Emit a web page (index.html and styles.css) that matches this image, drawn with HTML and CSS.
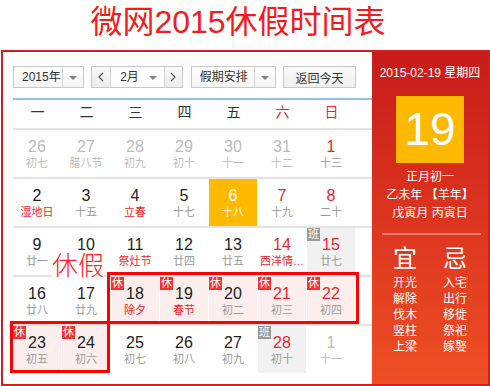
FILE: index.html
```html
<!DOCTYPE html>
<html lang="zh-CN">
  <head>
    <meta charset="UTF-8" />
    <title>微网2015休假时间表</title>
    <link rel="stylesheet" href="styles.css">
  </head>
  <body>
    <h1 class="title">微网2015休假时间表</h1>

    <div class="calendar">
      <div class="main">
        <div class="toolbar">
          <div class="select year">
            <span class="label">2015年</span>
            <span class="arrow"></span>
          </div>
          <div class="select month">
            <span class="nav">
              <svg width="6" height="10" viewBox="0 0 6 10"><polyline points="5,1 1,5 5,9" fill="none" stroke="#555" stroke-width="1.2"/></svg>
            </span>
            <span class="month-pick">
              <span class="label">2月</span>
              <span class="arrow"></span>
            </span>
            <span class="nav">
              <svg width="6" height="10" viewBox="0 0 6 10"><polyline points="1,1 5,5 1,9" fill="none" stroke="#555" stroke-width="1.2"/></svg>
            </span>
          </div>
          <div class="select plan">
            <span class="label">假期安排</span>
            <span class="arrow"></span>
          </div>
          <button class="today-btn">返回今天</button>
        </div>

        <div class="weekdays">
          <span>一</span><span>二</span><span>三</span><span>四</span><span>五</span>
          <span class="red">六</span><span class="red">日</span>
        </div>

        <div class="week">
          <div class="day other"><b class="num">26</b><span class="lunar">初七</span></div>
          <div class="day other"><b class="num">27</b><span class="lunar">腊八节</span></div>
          <div class="day other"><b class="num">28</b><span class="lunar">初九</span></div>
          <div class="day other"><b class="num">29</b><span class="lunar">初十</span></div>
          <div class="day other"><b class="num">30</b><span class="lunar">十一</span></div>
          <div class="day other"><b class="num">31</b><span class="lunar">十二</span></div>
          <div class="day"><b class="num red">1</b><span class="lunar">十三</span></div>
        </div>

        <div class="week">
          <div class="day"><b class="num">2</b><span class="lunar red">湿地日</span></div>
          <div class="day"><b class="num">3</b><span class="lunar">十五</span></div>
          <div class="day"><b class="num">4</b><span class="lunar red">立春</span></div>
          <div class="day"><b class="num">5</b><span class="lunar">十七</span></div>
          <div class="day current"><b class="num">6</b><span class="lunar">十八</span></div>
          <div class="day"><b class="num red">7</b><span class="lunar">十九</span></div>
          <div class="day"><b class="num red">8</b><span class="lunar">二十</span></div>
        </div>

        <div class="week">
          <div class="day"><b class="num">9</b><span class="lunar">廿一</span></div>
          <div class="day"><b class="num">10</b><span class="lunar">廿二</span></div>
          <div class="day"><b class="num">11</b><span class="lunar red">祭灶节</span></div>
          <div class="day"><b class="num">12</b><span class="lunar">廿四</span></div>
          <div class="day"><b class="num">13</b><span class="lunar">廿五</span></div>
          <div class="day"><b class="num red">14</b><span class="lunar red">西洋情人节</span></div>
          <div class="day work"><i class="tag">班</i><b class="num red">15</b><span class="lunar">廿七</span></div>
        </div>

        <div class="week">
          <div class="day"><b class="num">16</b><span class="lunar">廿八</span></div>
          <div class="day"><b class="num">17</b><span class="lunar">廿九</span></div>
          <div class="day rest"><i class="tag">休</i><b class="num">18</b><span class="lunar red">除夕</span></div>
          <div class="day rest"><i class="tag">休</i><b class="num">19</b><span class="lunar red">春节</span></div>
          <div class="day rest"><i class="tag">休</i><b class="num">20</b><span class="lunar">初二</span></div>
          <div class="day rest"><i class="tag">休</i><b class="num red">21</b><span class="lunar">初三</span></div>
          <div class="day rest"><i class="tag">休</i><b class="num red">22</b><span class="lunar">初四</span></div>
        </div>

        <div class="week">
          <div class="day rest"><i class="tag">休</i><b class="num">23</b><span class="lunar">初五</span></div>
          <div class="day rest"><i class="tag">休</i><b class="num">24</b><span class="lunar">初六</span></div>
          <div class="day"><b class="num">25</b><span class="lunar">初七</span></div>
          <div class="day"><b class="num">26</b><span class="lunar">初八</span></div>
          <div class="day"><b class="num">27</b><span class="lunar">初九</span></div>
          <div class="day work"><i class="tag">班</i><b class="num red">28</b><span class="lunar">初十</span></div>
          <div class="day other"><b class="num">1</b><span class="lunar">十一</span></div>
        </div>

        <!-- hand drawn marks over the grid -->
        <div class="mark mark-week"></div>
        <div class="mark mark-next"></div>
        <div class="note">休假</div>
      </div>

      <div class="side">
        <div class="side-date">2015-02-19 星期四</div>
        <div class="big-day">19</div>
        <div class="lunar-info">
          <div>正月初一</div>
          <div>乙未年 【羊年】</div>
          <div>戊寅月 丙寅日</div>
        </div>
        <div class="divider"></div>
        <div class="yiji">
          <ul>
            <li class="head">宜</li>
            <li>开光</li>
            <li>解除</li>
            <li>伐木</li>
            <li>竖柱</li>
            <li>上梁</li>
          </ul>
          <ul>
            <li class="head">忌</li>
            <li>入宅</li>
            <li>出行</li>
            <li>移徙</li>
            <li>祭祀</li>
            <li>嫁娶</li>
          </ul>
        </div>
      </div>
    </div>
  </body>
</html>
```

FILE: styles.css
```css
body {
  margin: 0;
  font-family: "Liberation Sans", "Noto Sans CJK SC", sans-serif;
  color: #333;
  background: #fff;
}
.title {
  margin: 0;
  height: 50px;
  line-height: 44px;
  padding-right: 14px;
  text-align: center;
  font-size: 32px;
  font-weight: normal;
  color: #f31c1c;
}
.calendar {
  display: flex;
  width: 489px;
  height: 336px;
  margin-left: 1px;
  box-sizing: border-box;
  border: 2px solid #cf1f1f;
}
.main {
  position: relative;
  width: 369px;
  padding: 14px 0 0 10px;
  box-sizing: border-box;
  background: #fff;
}

/* toolbar */
.toolbar {
  display: flex;
  justify-content: space-between;
  width: 343px;
  height: 22px;
}
.select {
  display: flex;
  height: 22px;
  box-sizing: border-box;
  border: 1px solid #c8c8c8;
  background: linear-gradient(#fff, #f4f4f4);
  font-size: 12px;
  line-height: 20px;
  color: #333;
  white-space: nowrap;
}
.select .label {
  box-sizing: border-box;
  padding-left: 8px;
}
.arrow {
  position: relative;
  width: 20px;
}
.arrow::after {
  content: "";
  position: absolute;
  left: 50%;
  top: 9px;
  margin-left: -4px;
  border-left: 4px solid transparent;
  border-right: 4px solid transparent;
  border-top: 4px solid #808080;
}
.year {
  width: 71px;
}
.year .label {
  width: 49px;
  border-right: 1px solid #d2d2d2;
}
.year .arrow {
  width: 20px;
}
.month {
  width: 92px;
}
.nav {
  display: flex;
  align-items: center;
  justify-content: center;
  width: 18px;
  background: linear-gradient(#f8f8f8, #ececec);
}
.month-pick {
  display: flex;
  width: 55px;
  box-sizing: border-box;
  border-left: 1px solid #d2d2d2;
  border-right: 1px solid #d2d2d2;
  background: #fff;
}
.month-pick .label {
  flex: 1;
  padding-left: 9px;
}
.month-pick .arrow {
  width: 22px;
}
.plan {
  width: 85px;
}
.plan .label {
  width: 63px;
  border-right: 1px solid #d2d2d2;
}
.today-btn {
  width: 73px;
  height: 22px;
  padding: 0;
  border: 1px solid #c8c8c8;
  background: linear-gradient(#fafafa, #efefef);
  font-family: inherit;
  font-size: 12px;
  color: #333;
}

/* grid */
.weekdays,
.week {
  display: grid;
  grid-template-columns: repeat(7, 49px);
}
.weekdays {
  margin-top: 10px;
  height: 28px;
  border-top: 2px solid #8ec0f2;
  line-height: 25px;
  text-align: center;
  font-size: 14px;
  color: #333;
}
.week {
  border-top: 2px solid #e3e3e3;
}
.day {
  position: relative;
  height: 47px;
  box-sizing: border-box;
  border-right: 1px solid #fff;
  padding-top: 8px;
  text-align: center;
}
.num {
  display: block;
  font-size: 16px;
  font-weight: normal;
  line-height: 18px;
  color: #222;
}
.lunar {
  display: block;
  padding: 0 2px;
  font-size: 11px;
  line-height: 15px;
  color: #999;
  white-space: nowrap;
  overflow: hidden;
  text-overflow: ellipsis;
}
.red,
.weekdays .red,
.num.red,
.lunar.red {
  color: #e8272c;
}
.other .num,
.other .lunar {
  color: #bbb;
}
.current {
  background: #ffb900;
}
.current .num,
.current .lunar {
  color: #fff;
}
.rest {
  background: #fdeeee;
}
.work {
  background: #f1f1f1;
}
.tag {
  position: absolute;
  left: 0;
  top: 0;
  width: 13px;
  height: 13px;
  font-style: normal;
  font-size: 11px;
  line-height: 13px;
  color: #fff;
  background: #f43434;
}
.work .tag {
  background: #999;
}

/* hand drawn marks */
.mark {
  position: absolute;
  box-sizing: border-box;
  border: 3px solid #f00;
}
.mark-week {
  left: 104px;
  top: 220px;
  width: 252px;
  height: 52px;
}
.mark-next {
  left: 7px;
  top: 269px;
  width: 100px;
  height: 52px;
}
.note {
  position: absolute;
  left: 49px;
  top: 199px;
  font-family: "Noto Sans CJK SC", sans-serif;
  font-weight: 300;
  font-size: 26px;
  line-height: 26px;
  color: #f22;
  background: #fff;
}

/* side panel */
.side {
  flex: 1;
  background: linear-gradient(#c81b1a, #ef4f24);
  color: #fff;
  text-align: center;
  font-size: 12px;
}
.side-date {
  margin-top: 13px;
  line-height: 16px;
}
.big-day {
  width: 68px;
  height: 67px;
  margin: 15px auto 0;
  background: #ffb900;
  font-size: 46px;
  line-height: 67px;
}
.lunar-info {
  margin-top: 5px;
  line-height: 18px;
}
.divider {
  height: 2px;
  margin: 11px 7px 0 10px;
  background: rgba(255, 255, 255, 0.35);
}
.yiji {
  display: flex;
  justify-content: center;
  margin-top: 10px;
}
.yiji ul {
  width: 50px;
  margin: 0;
  padding: 0;
  list-style: none;
  line-height: 16px;
}
.yiji .head {
  font-size: 24px;
  line-height: 28px;
  margin-bottom: 2px;
}
```
